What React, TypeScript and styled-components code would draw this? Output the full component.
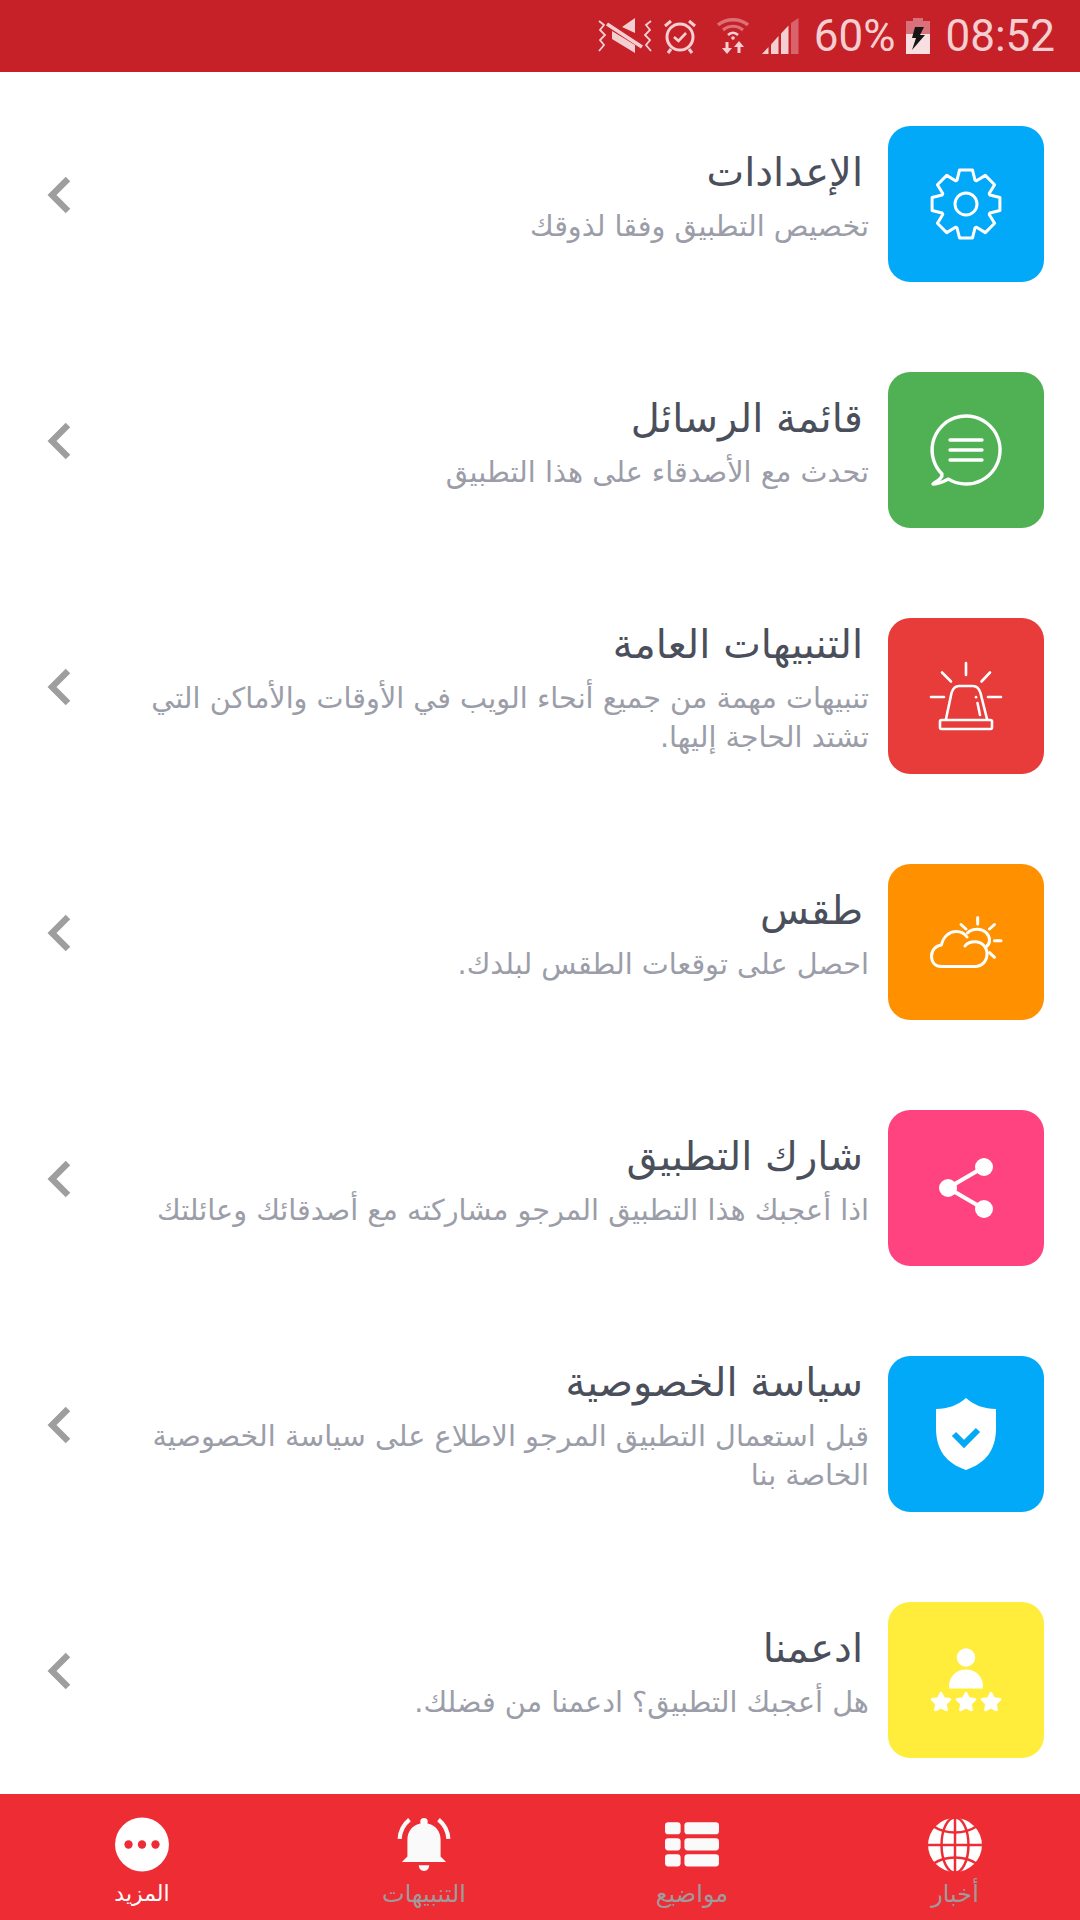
import React from 'react';
import styled, { createGlobalStyle } from 'styled-components';

const GlobalStyle = createGlobalStyle`
  html, body {
    margin: 0;
    padding: 0;
    background: #fff;
  }
  body {
    font-family: 'DejaVu Sans', 'Noto Sans', sans-serif;
  }
`;

const gearPath = () => {
  const teeth = 8;
  const pts: string[] = [];
  for (let i = 0; i < teeth; i++) {
    const a = (i * Math.PI * 2) / teeth;
    const spots: [number, number][] = [
      [25.5, -0.36],
      [34.5, -0.19],
      [34.5, 0.19],
      [25.5, 0.36],
    ];
    spots.forEach(([r, d]) => {
      const x = 36 + r * Math.cos(a + d);
      const y = 36 + r * Math.sin(a + d);
      pts.push(`${x.toFixed(1)},${y.toFixed(1)}`);
    });
  }
  return `M${pts.join(' L')} Z`;
};

const GearIcon = () => (
  <TileSvg viewBox="0 0 72 72" fill="none" stroke="#fff" strokeWidth="3" strokeLinejoin="round">
    <path d={gearPath()} />
    <circle cx="36" cy="36" r="11" />
  </TileSvg>
);

const ChatIcon = () => (
  <TileSvg viewBox="0 0 72 72" fill="none" stroke="#fff" strokeWidth="3.4" strokeLinecap="round" strokeLinejoin="round">
    <path d="M12 60 A34 34 0 1 1 18.5 65.1 C13 68 8 70.5 3 70 C7 67 13 64 12 60 Z" />
    <path d="M20 26 H52 M20 36 H52 M20 46 H52" />
  </TileSvg>
);

const AlarmIcon = () => (
  <TileSvg viewBox="0 0 72 72" fill="none" stroke="#fff" strokeWidth="2.6" strokeLinecap="round" strokeLinejoin="round">
    <path d="M36 3 V15 M12 12.5 L21 21.5 M60 12.5 L51.5 21.5 M1 37 H14 M58 37 H71" />
    <path d="M16 59 L21.5 33 C23 28 25 26 29 26 H43 C47 26 49 28 50.5 33 L57 59" />
    <rect x="10" y="60" width="52" height="9" rx="1.5" />
    <path d="M47.5 43 L50 55" />
    <path d="M46 37 V37.2" />
  </TileSvg>
);

const WeatherIcon = () => (
  <TileSvg viewBox="0 0 72 72" fill="none" stroke="#fff" strokeWidth="3" strokeLinecap="round" strokeLinejoin="round">
    <path d="M45 60.5 H11.5 C5 60.5 1.5 56 1.5 50 C1.5 44 6 39.5 11.5 39 C13 31 19 25.5 26.5 25.5 C30.5 25.5 34.5 27.5 37 31" />
    <path d="M35 40 C37 37 41 35.7 45 35.7 C52 35.7 57 41 57 48 C57 55 52 60.5 45 60.5" />
    <path d="M37.5 27 C40 24.5 44 23.3 47.5 23.3 C54 23.3 59.5 28 59.5 34.5 C59.5 37 58 39.5 56 41" />
    <path d="M47.7 11.5 V18 M31 18.5 L36 23 M64.5 18.5 L59.5 23 M64.5 34.7 H71 M59.5 46.7 L64.5 51.3" />
  </TileSvg>
);

const ShareIcon = () => (
  <TileSvg viewBox="0 0 72 72" fill="#fff">
    <circle cx="18" cy="36" r="9" />
    <circle cx="54" cy="15" r="9" />
    <circle cx="54" cy="57" r="9" />
    <path d="M18 36 L54 15 M18 36 L54 57" stroke="#fff" strokeWidth="4" />
  </TileSvg>
);

const ShieldIcon = () => (
  <TileSvg viewBox="0 0 72 72" fill="#fff">
    <path d="M36 0 C28 7 18 11 6 11 V30 C6 52 16 65 36 72 C56 65 66 52 66 30 V11 C54 11 44 7 36 0 Z" />
    <path d="M24 36 L34 46 L48 32" fill="none" stroke="#03a9f4" strokeWidth="6" />
  </TileSvg>
);

const SupportIcon = () => {
  const star = 'M0,-9 L2.8,-3.4 L9,-2.6 L4.5,1.8 L5.6,8 L0,5 L-5.6,8 L-4.5,1.8 L-9,-2.6 L-2.8,-3.4 Z';
  return (
    <TileSvg viewBox="0 0 72 72" fill="#fff">
      <circle cx="36" cy="13.5" r="9.2" />
      <path d="M19 44.5 C18 33 26 25.5 36 25.5 C46 25.5 54 33 53 44.5 Z" />
      {[11, 36, 61].map(x => (
        <path key={x} d={star} transform={`translate(${x} 58)`} stroke="#fff" strokeWidth="2.6" strokeLinejoin="round" />
      ))}
    </TileSvg>
  );
};

const Chevron = () => (
  <ChevronSvg viewBox="0 0 26 38" fill="none" stroke="#9e9e9e" strokeWidth="6.4">
    <path d="M22 3 L6 19 L22 35" />
  </ChevronSvg>
);

const MuteIcon = () => (
  <svg width="54" height="36" viewBox="0 0 54 36" fill="none">
    <path d="M1 3 L6 7 L2 12 L7 17 L2 22 L6 27 L1 33 M53 3 L48 7 L52 12 L47 17 L52 22 L48 27 L53 33" stroke="#f3cfd1" strokeWidth="1.8" />
    <path d="M37 0 V15 L24 9 Z M14 13 L37 27 V35 L14 21 Z" fill="#f3cfd1" />
    <path d="M9 6 L44 29" stroke="#f3cfd1" strokeWidth="3.6" />
  </svg>
);

const AlarmClockIcon = () => (
  <svg width="32" height="36" viewBox="0 0 32 36" fill="none" stroke="#f3cfd1">
    <circle cx="16" cy="19" r="13" strokeWidth="3" />
    <path d="M10 19 L14.5 23 L22 15" strokeWidth="2.6" />
    <path d="M1 8 L7 3 M31 8 L25 3 M7 31 L4 35 M25 31 L28 35" strokeWidth="3" />
  </svg>
);

const WifiIcon = () => (
  <svg width="32" height="38" viewBox="0 0 32 38" fill="none">
    <path d="M1 8 C9 1 23 1 31 8" stroke="#dd7077" strokeWidth="3.4" />
    <path d="M6 13 C12 8 20 8 26 13" stroke="#dd7077" strokeWidth="3" />
    <path d="M11 18 C14 15 18 15 21 18" stroke="#f3cfd1" strokeWidth="2.6" />
    <circle cx="16" cy="21" r="1.8" fill="#f3cfd1" />
    <path d="M10 25 V34 M22 36 V27" stroke="#f3cfd1" strokeWidth="3" />
    <path d="M5 31 H15 L10 37 Z" fill="#f3cfd1" />
    <path d="M17 30 H27 L22 24 Z" fill="#f3cfd1" />
  </svg>
);

const SignalIcon = () => (
  <svg width="37" height="36" viewBox="0 0 37 36" fill="#f3cfd1">
    <path d="M0 36 L6.5 29 V36 Z" />
    <path d="M9 26.5 L16.5 18 V36 H9 Z" />
    <path d="M19 15.5 L26.5 7.5 V36 H19 Z" />
    <path d="M29 5 L36.5 0 V36 H29 Z" fill="#d9636b" />
  </svg>
);

const BatteryIcon = () => (
  <svg width="24" height="36" viewBox="0 0 24 36">
    <path d="M7 0 H17 V3 H24 V16 H0 V3 H7 Z" fill="#d9717a" />
    <rect y="16" width="24" height="20" fill="#f8dfe1" />
    <path d="M9 9 H18 L14 17 H19 L6 32 L10 20 H6 Z" fill="#161616" />
  </svg>
);

const MoreIcon = () => (
  <NavSvg viewBox="0 0 52 54">
    <circle cx="26" cy="26.5" r="26" fill="#fff" />
    <circle cx="13" cy="26.5" r="4" fill="#ee2c34" />
    <circle cx="26" cy="26.5" r="4" fill="#ee2c34" />
    <circle cx="39" cy="26.5" r="4" fill="#ee2c34" />
  </NavSvg>
);

const BellIcon = () => (
  <NavSvg viewBox="0 0 52 54" fill="#fafafa">
    <circle cx="26" cy="4.5" r="3.6" />
    <path d="M26 6 C16 6 10 13 10 22 V38 L4.7 43.5 H47.3 L42 38 V22 C42 13 36 6 26 6 Z" />
    <path d="M21 46.5 H31 C31 49.5 29 52 26 52 C23 52 21 49.5 21 46.5 Z" />
    <path d="M2.5 21 C3 13 6.5 7 12 2.5 M49.5 21 C49 13 45.5 7 40 2.5" fill="none" stroke="#fafafa" strokeWidth="4" />
  </NavSvg>
);

const ListIcon = () => (
  <NavSvg viewBox="0 0 52 54" fill="#fafafa">
    <rect x="0" y="5" width="15" height="11.7" rx="3" />
    <rect x="18.7" y="5" width="33.3" height="11.7" rx="3" />
    <rect x="0" y="20.5" width="15" height="11.7" rx="3" />
    <rect x="18.7" y="20.5" width="33.3" height="11.7" rx="3" />
    <rect x="0" y="36" width="15" height="11.7" rx="3" />
    <rect x="18.7" y="36" width="33.3" height="11.7" rx="3" />
  </NavSvg>
);

const GlobeIcon = () => (
  <NavSvg viewBox="0 0 52 54">
    <circle cx="26" cy="27" r="26" fill="#fff" />
    <g fill="none" stroke="#ee2c34" strokeWidth="2.4">
      <path d="M26 0 V54 M0 27 H52" />
      <ellipse cx="26" cy="27" rx="13" ry="26.5" />
      <path d="M5 9 C17 17 35 17 47 9 M5 45 C17 37 35 37 47 45" />
    </g>
  </NavSvg>
);

type Item = { title: string; text: string; color: string; icon: React.ReactNode };

const items: Item[] = [
  { title: 'الإعدادات', text: 'تخصيص التطبيق وفقا لذوقك', color: '#03a9f9', icon: <GearIcon /> },
  { title: 'قائمة الرسائل', text: 'تحدث مع الأصدقاء على هذا التطبيق', color: '#4fb153', icon: <ChatIcon /> },
  {
    title: 'التنبيهات العامة',
    text: 'تنبيهات مهمة من جميع أنحاء الويب في الأوقات والأماكن التي تشتد الحاجة إليها.',
    color: '#e73c39',
    icon: <AlarmIcon />,
  },
  { title: 'طقس', text: 'احصل على توقعات الطقس لبلدك.', color: '#ff9100', icon: <WeatherIcon /> },
  { title: 'شارك التطبيق', text: 'اذا أعجبك هذا التطبيق المرجو مشاركته مع أصدقائك وعائلتك', color: '#ff4280', icon: <ShareIcon /> },
  {
    title: 'سياسة الخصوصية',
    text: 'قبل استعمال التطبيق المرجو الاطلاع على سياسة الخصوصية الخاصة بنا',
    color: '#03a9f9',
    icon: <ShieldIcon />,
  },
  { title: 'ادعمنا', text: 'هل أعجبك التطبيق؟ ادعمنا من فضلك.', color: '#ffec3b', icon: <SupportIcon /> },
];

const tabs = [
  { label: 'المزيد', icon: <MoreIcon />, active: true, width: 284 },
  { label: 'التنبيهات', icon: <BellIcon />, active: false, width: 280 },
  { label: 'مواضيع', icon: <ListIcon />, active: false, width: 256 },
  { label: 'أخبار', icon: <GlobeIcon />, active: false, width: 270 },
];

export default function App() {
  return (
    <Page>
      <GlobalStyle />
      <StatusBar>
        <StatusSlot $after={12}>
          <MuteIcon />
        </StatusSlot>
        <StatusSlot $after={21}>
          <AlarmClockIcon />
        </StatusSlot>
        <StatusSlot $after={13}>
          <WifiIcon />
        </StatusSlot>
        <StatusSlot $after={15}>
          <SignalIcon />
        </StatusSlot>
        <StatusText $after={11}>60%</StatusText>
        <StatusSlot $after={15}>
          <BatteryIcon />
        </StatusSlot>
        <StatusText $after={0}>08:52</StatusText>
      </StatusBar>
      <List>
        {items.map(item => (
          <Row key={item.title}>
            <Tile $color={item.color}>{item.icon}</Tile>
            <Texts>
              <Title>{item.title}</Title>
              <Subtitle>{item.text}</Subtitle>
            </Texts>
            <Chevron />
          </Row>
        ))}
      </List>
      <BottomNav>
        {tabs.map(tab => (
          <Tab key={tab.label} $width={tab.width}>
            {tab.icon}
            <TabLabel $active={tab.active}>{tab.label}</TabLabel>
          </Tab>
        ))}
      </BottomNav>
    </Page>
  );
}

const Page = styled.div`
  width: 1080px;
  height: 1920px;
  display: flex;
  flex-direction: column;
  overflow: hidden;
  background: #fff;
`;

const StatusBar = styled.div`
  height: 72px;
  flex: none;
  display: flex;
  align-items: center;
  justify-content: flex-end;
  padding-right: 25px;
  background: #c62128;
`;

const StatusSlot = styled.div<{ $after: number }>`
  display: flex;
  margin-right: ${p => p.$after}px;
`;

const StatusText = styled.span<{ $after: number }>`
  font-family: Roboto, sans-serif;
  font-size: 44px;
  line-height: 72px;
  color: #f3cfd1;
  margin-right: ${p => p.$after}px;
`;

const List = styled.div`
  flex: 1;
  display: flex;
  flex-direction: column;
  gap: 90px;
  padding: 54px 36px 0 0;
`;

const Row = styled.div`
  display: flex;
  direction: rtl;
  align-items: center;
  height: 156px;
`;

const Tile = styled.div<{ $color: string }>`
  width: 156px;
  height: 156px;
  flex: none;
  display: flex;
  align-items: center;
  justify-content: center;
  border-radius: 22px;
  background: ${p => p.$color};
`;

const TileSvg = styled.svg`
  width: 72px;
  height: 72px;
  overflow: visible;
`;

const Texts = styled.div`
  flex: 1;
  margin-right: 19px;
  padding: 0 0 16px 76px;
  text-align: right;
`;

const Title = styled.div`
  font-size: 40px;
  line-height: 50px;
  margin-bottom: 10px;
  color: #4a4f5b;
  padding-right: 6px;
`;

const Subtitle = styled.div`
  font-size: 28.7px;
  line-height: 39px;
  color: #9b9da8;
`;

const ChevronSvg = styled.svg`
  width: 26px;
  height: 38px;
  flex: none;
  margin: 0 0 18px 46px;
`;

const BottomNav = styled.div`
  height: 126px;
  flex: none;
  display: flex;
  padding-top: 23px;
  box-sizing: border-box;
  background: #ee2c34;
`;

const Tab = styled.div<{ $width: number }>`
  width: ${p => p.$width}px;
  flex: none;
  display: flex;
  flex-direction: column;
  align-items: center;
`;

const NavSvg = styled.svg`
  width: 54px;
  height: 56px;
  margin-bottom: -2px;
`;

const TabLabel = styled.span<{ $active: boolean }>`
  font-size: ${p => (p.$active ? 22 : 24)}px;
  line-height: 46px;
  color: ${p => (p.$active ? '#fff' : '#a09a9c')};
`;
